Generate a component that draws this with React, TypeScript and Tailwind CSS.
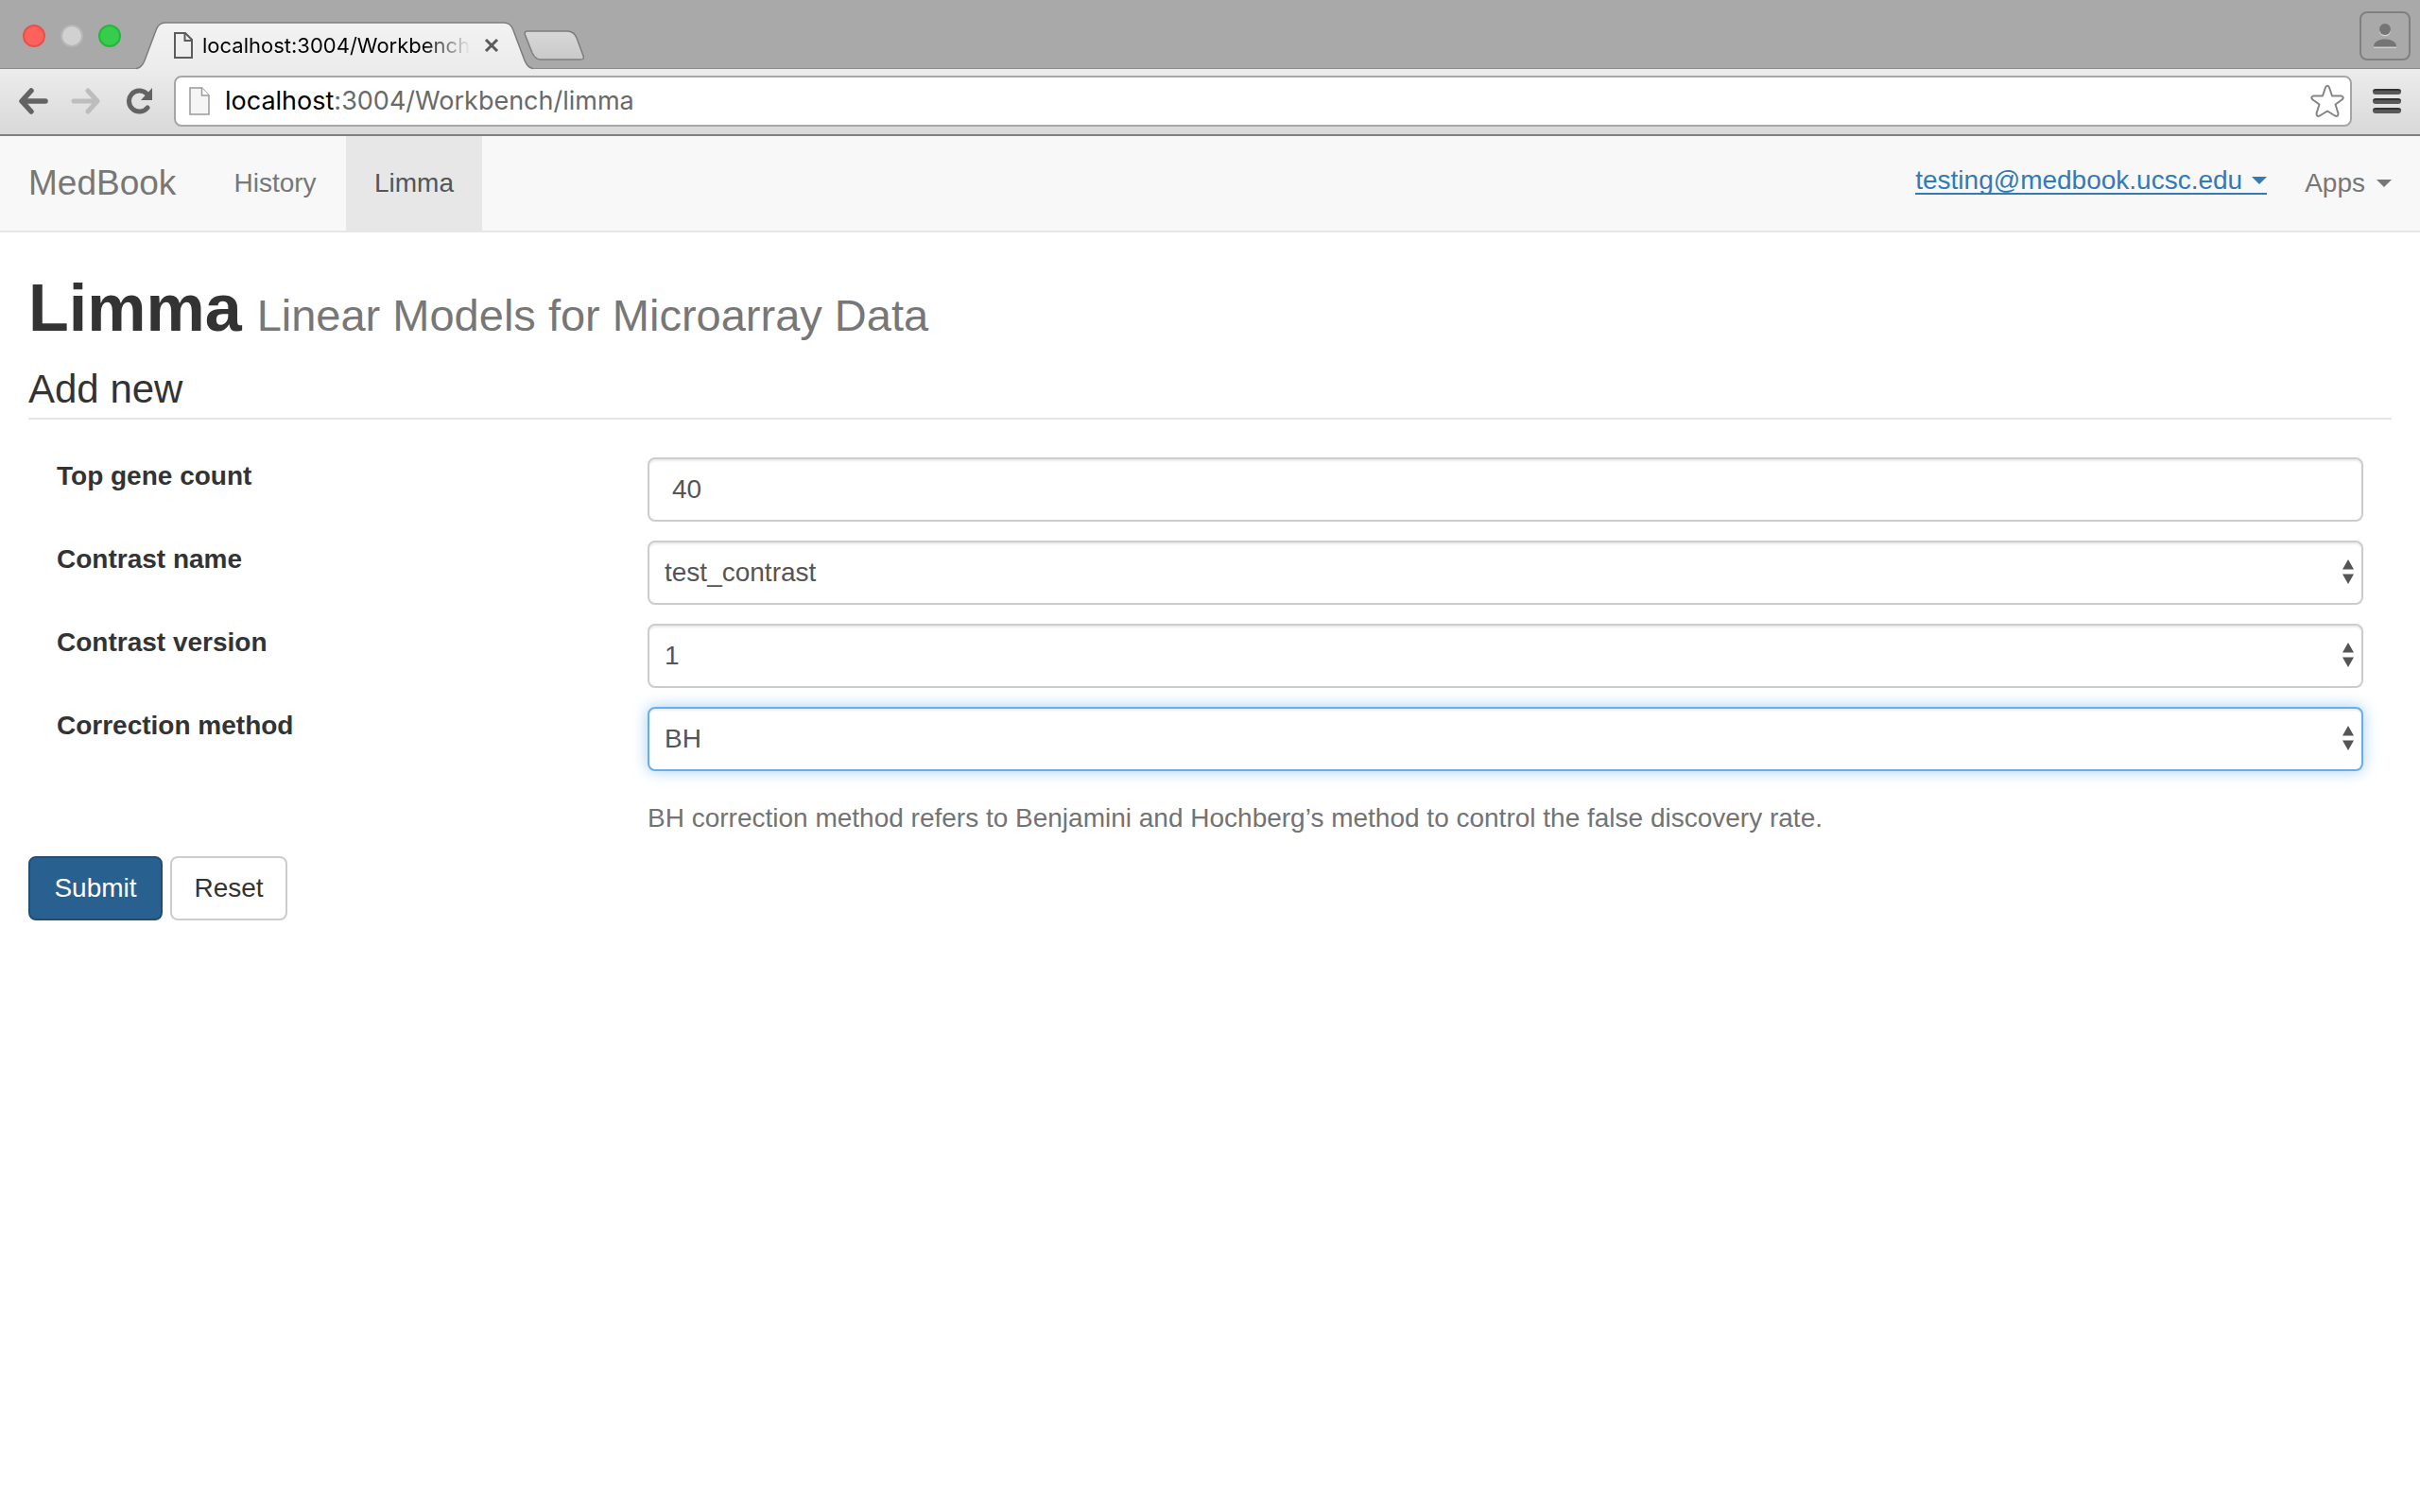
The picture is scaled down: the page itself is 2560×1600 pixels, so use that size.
import React, { useState, type ReactNode } from "react";

function TrafficLights() {
  return (
    <div className="flex items-center gap-4 pl-6 pt-[26px] h-[50px]">
      <span className="size-6 rounded-full border-2 border-[#e9504c] bg-[#ff625c]" />
      <span className="size-6 rounded-full border-2 border-[#b6b6b6] bg-[#d1d1d1]" />
      <span className="size-6 rounded-full border-2 border-[#24b73b] bg-[#35cd4b]" />
    </div>
  );
}

function TabStrip() {
  return (
    <div className="flex h-[72px] items-start bg-[#a9a9a9]">
      <TrafficLights />
      <div className="relative ml-4 h-[74px] w-[420px] shrink-0 pt-[22px]">
        <svg className="absolute left-0 top-[22px] h-[52px] w-[420px]" viewBox="0 0 420 52" fill="none" aria-hidden="true">
          <defs>
            <linearGradient id="tabFill" x1="0" y1="0" x2="0" y2="1">
              <stop offset="0" stopColor="#f2f2f2" />
              <stop offset="1" stopColor="#ececec" />
            </linearGradient>
          </defs>
          <path
            d="M0 50.5C5 50 7 47 9 42L21 10C23 4 26 2 31 2H389C394 2 397 4 399 10L411 42C413 47 415 50 420 50.5V52H0Z"
            fill="url(#tabFill)"
          />
          <path
            d="M0 50.5C5 50 7 47 9 42L21 10C23 4 26 2 31 2H389C394 2 397 4 399 10L411 42C413 47 415 50 420 50.5"
            stroke="#7d7d7d"
            strokeWidth="1.5"
          />
        </svg>
        <div className="relative flex h-[52px] items-center pl-10 pr-9">
          <svg className="h-7 w-5 shrink-0" viewBox="0 0 20 28" fill="none" stroke="#5c5c5c" strokeWidth="2" aria-hidden="true">
            <path d="M1 1H12L19 8V27H1Z" />
            <path d="M11.5 1V9H19" />
          </svg>
          <span className="ml-2.5 w-[286px] whitespace-nowrap font-[Inter] text-[22px] leading-8 text-black [mask-image:linear-gradient(to_right,#000_82%,transparent)]">
            localhost:3004/Workbench
          </span>
          <button type="button" aria-label="Close tab" className="ml-3.5 shrink-0">
            <svg className="size-4" viewBox="0 0 16 16" stroke="#5a5a5a" strokeWidth="3" aria-hidden="true">
              <path d="M2 2L14 14M14 2L2 14" />
            </svg>
          </button>
        </div>
      </div>
      <button type="button" aria-label="New tab" className="-ml-2.5 mt-8 shrink-0">
        <svg className="h-8 w-16" viewBox="0 0 64 32" aria-hidden="true">
          <defs>
            <linearGradient id="newTabFill" x1="0" y1="0" x2="0" y2="1">
              <stop offset="0" stopColor="#d8d8d8" />
              <stop offset="1" stopColor="#c9c9c9" />
            </linearGradient>
          </defs>
          <path
            d="M4 1H46C51 1 54 3 56 8L63 27C64 30 63 31 60 31H18C13 31 11 28 9 24L1.5 5C.5 2.500 1.500 1 4 1Z"
            fill="url(#newTabFill)"
            stroke="#7d7d7d"
            strokeWidth="1.5"
          />
        </svg>
      </button>
      <button
        type="button"
        aria-label="Profile"
        className="ml-auto mr-2.5 mt-3 flex h-[52px] w-[54px] items-center justify-center rounded-lg border-2 border-[#808080] bg-[#a9a9a9]"
      >
        <svg className="h-[26px] w-6" viewBox="0 0 24 26" aria-hidden="true">
          <path d="M0 26V25C0 20 6 17.500 12 17.500S24 20 24 25V26Z" fill="#d0d0d0" />
          <circle cx="12" cy="7.500" r="6" fill="#d0d0d0" />
          <circle cx="12" cy="6" r="6" fill="#757575" />
          <path d="M0 24.500V24C0 19 6 16.500 12 16.500S24 19 24 24V24.500Z" fill="#757575" />
        </svg>
      </button>
    </div>
  );
}

function Toolbar() {
  return (
    <div className="flex h-[72px] items-center border-t border-b-2 border-t-[#8a8a8a] border-b-[#808080] bg-linear-to-b from-[#ececec] to-[#d9d9d9] px-5 pb-0.5">
      <button type="button" aria-label="Back">
        <svg className="h-7 w-8" viewBox="0 0 32 28" fill="none" stroke="#636363" strokeWidth="5.500" strokeLinecap="round" strokeLinejoin="round" aria-hidden="true">
          <path d="M13 3L3 14L13 25M4 14H28" />
        </svg>
      </button>
      <button type="button" aria-label="Forward" className="ml-[22px]">
        <svg className="h-7 w-8" viewBox="0 0 32 28" fill="none" stroke="#bdbdbd" strokeWidth="5" strokeLinecap="round" strokeLinejoin="round" aria-hidden="true">
          <path d="M19 3L29 14L19 25M28 14H4" />
        </svg>
      </button>
      <button type="button" aria-label="Reload" className="ml-7">
        <svg className="size-7" viewBox="0 0 28 28" aria-hidden="true">
          <path d="M21 6A11 11 0 1 0 22 21" fill="none" stroke="#636363" strokeWidth="5" strokeLinecap="round" />
          <path d="M27 0V13H15Z" fill="#636363" />
        </svg>
      </button>
      <div className="ml-[22px] flex h-[54px] flex-1 items-center rounded-lg border-2 border-[#a6a6a6] bg-white pl-3.5 pr-1.5">
        <svg className="h-[30px] w-[22px] shrink-0" viewBox="0 0 22 30" fill="#f5f5f5" stroke="#999" strokeWidth="1.500" aria-hidden="true">
          <path d="M1 1H13.500L21 9V29H1Z" />
          <path d="M13.500 1V9H21" fill="#fff" />
        </svg>
        <div className="ml-4 flex-1 whitespace-nowrap font-[Inter] text-[27px] leading-9 text-[#696969]">
          <span className="text-black">localhost</span>:3004/Workbench/limma
        </div>
        <button type="button" aria-label="Bookmark this page">
          <svg className="size-9" viewBox="0 0 36 36" fill="#fff" stroke="#858585" strokeWidth="2" strokeLinejoin="round" aria-hidden="true">
            <path d="M16 3.500Q18 0 20 3.500L23 12.500H32.500Q36.500 13.500 33.500 16.500L26.500 21.500L29.500 31Q29.500 35 26 33.500L18 28.500L10 33.500Q6.500 35 6.500 31L9.500 21.500L2.500 16.500Q-.5 13.500 3.500 12.500H13Z" />
          </svg>
        </button>
      </div>
      <button type="button" aria-label="Menu" className="ml-[22px] flex flex-col gap-1">
        <span className="h-1.5 w-[30px] rounded-full border-t-2 border-[#333] bg-[#585858]" />
        <span className="h-1.5 w-[30px] rounded-full border-t-2 border-[#333] bg-[#585858]" />
        <span className="h-1.5 w-[30px] rounded-full border-t-2 border-[#333] bg-[#585858]" />
      </button>
    </div>
  );
}

function Caret() {
  return (
    <svg className="h-2 w-4" viewBox="0 0 16 8" fill="currentColor" aria-hidden="true">
      <path d="M0 0H16L8 8Z" />
    </svg>
  );
}

function Navbar() {
  return (
    <nav className="flex h-[102px] items-stretch border-b-2 border-[#e7e7e7] bg-[#f8f8f8] text-[28px] leading-10 text-[#777]">
      <a href="#home" className="flex w-[216px] items-center pl-[30px] text-[37px]">MedBook</a>
      <a href="#history" className="flex w-[150px] items-center justify-center">History</a>
      <a href="#limma" aria-current="page" className="flex w-36 items-center justify-center bg-[#e7e7e7] text-[#555]">Limma</a>
      <div className="ml-auto flex items-center gap-10 pr-[30px]">
        <a href="#account" className="mb-1 flex h-7 items-center gap-2.5 border-b-2 border-[#337ab7] leading-7 text-[#337ab7]">
          testing@medbook.ucsc.edu
          <Caret />
        </a>
        <a href="#apps" className="flex items-center gap-3">
          Apps
          <Caret />
        </a>
      </div>
    </nav>
  );
}

const control =
  "block h-[68px] w-full appearance-none rounded-lg border-2 border-[#ccc] bg-white text-[28px] leading-10 text-[#555] shadow-[inset_0_2px_2px_rgba(0,0,0,0.075)] outline-none";
const focusedControl =
  "block h-[68px] w-full appearance-none rounded-lg border-2 border-[#66afe9] bg-white text-[28px] leading-10 text-[#555] shadow-[inset_0_2px_2px_rgba(0,0,0,0.075),0_0_16px_rgba(102,175,233,0.6)] outline-none";

function Field({ id, label, children }: { id: string; label: string; children: ReactNode }) {
  return (
    <div className="grid grid-cols-4">
      <label htmlFor={id} className="px-[30px] font-bold">{label}</label>
      <div className="col-span-3 px-[30px]">{children}</div>
    </div>
  );
}

function SelectBox({ id, option, focused = false }: { id: string; option: string; focused?: boolean }) {
  return (
    <div className="relative">
      <select id={id} className={`${focused ? focusedControl : control} pl-4 pr-12`}>
        <option>{option}</option>
      </select>
      <svg className="pointer-events-none absolute right-2.5 top-5 h-[26px] w-3" viewBox="0 0 12 26" fill="#555" aria-hidden="true">
        <path d="M0 10.500L6 0L12 10.500ZM0 15.500H12L6 26Z" />
      </svg>
    </div>
  );
}

function LimmaForm() {
  const [count, setCount] = useState("40");
  return (
    <form onSubmit={(e) => e.preventDefault()}>
      <fieldset>
        <legend className="mb-10 block w-full border-b-2 border-[#e5e5e5] text-[42px] leading-[60px]">Add new</legend>
        <div className="flex flex-col gap-5">
          <Field id="count" label="Top gene count">
            <input id="count" type="text" value={count} onChange={(e) => setCount(e.target.value)} className={`${control} px-6`} />
          </Field>
          <Field id="name" label="Contrast name">
            <SelectBox id="name" option="test_contrast" />
          </Field>
          <Field id="version" label="Contrast version">
            <SelectBox id="version" option="1" />
          </Field>
          <Field id="method" label="Correction method">
            <SelectBox id="method" option="BH" focused />
            <p className="mt-[30px] text-[#737373]">
              BH correction method refers to Benjamini and Hochberg’s method to control the false discovery rate.
            </p>
          </Field>
        </div>
      </fieldset>
      <div className="mt-5 flex gap-2">
        <button type="submit" className="h-[68px] w-[142px] rounded-lg border-2 border-[#204d74] bg-[#286090] text-white">Submit</button>
        <button type="reset" className="h-[68px] w-[124px] rounded-lg border-2 border-[#ccc] bg-white text-[#333]">Reset</button>
      </div>
    </form>
  );
}

export default function App() {
  return (
    <div className="min-h-screen bg-white font-['Liberation_Sans',Arial,sans-serif] text-[28px] leading-10 text-[#333]">
      <header>
        <TabStrip />
        <Toolbar />
      </header>
      <Navbar />
      <main className="px-[30px] pt-10">
        <h1 className="mb-4 flex items-baseline gap-4 text-[70px] leading-[80px]">
          <span className="font-bold">Limma</span>
          <small className="text-[47px] leading-none text-[#777]">Linear Models for Microarray Data</small>
        </h1>
        <LimmaForm />
      </main>
    </div>
  );
}
